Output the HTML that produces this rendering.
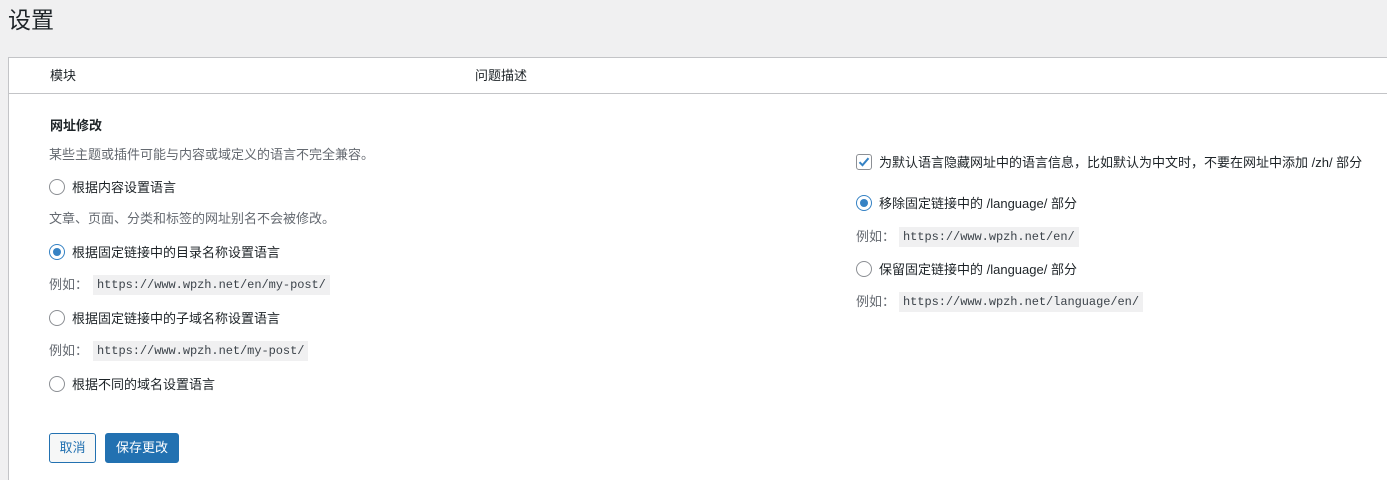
<!DOCTYPE html>
<html><head><meta charset="utf-8"><style>
*{margin:0;padding:0;box-sizing:border-box}
html,body{width:1387px;height:480px;overflow:hidden}
body{background:#f0f0f1;font-family:"Liberation Sans","Noto Sans CJK SC",sans-serif;font-size:13px;color:#1d2327;position:relative}
.a{position:absolute;white-space:nowrap;line-height:18px}
h1{position:absolute;left:8px;top:5px;font-size:23px;font-weight:400;line-height:30px;color:#1d2327}
.panel{position:absolute;left:8px;top:57px;width:1379px;height:423px;background:#fff;border:1px solid #c3c4c7;border-right:0;border-bottom:0}
.hdr{position:absolute;left:8px;top:93px;width:1379px;border-top:1px solid #c3c4c7}
.gray{color:#646970}
.r{position:absolute;width:16px;height:16px;border:1px solid #8c8f94;border-radius:50%;background:#fff}
.r.on::after{content:"";position:absolute;left:3px;top:3px;width:8px;height:8px;border-radius:50%;background:#3582c4}
.r.on{border-color:#3582c4}
code{position:absolute;font-family:"Liberation Mono",monospace;font-size:12px;background:#f0f0f1;color:#3c434a;padding:0 4px;line-height:20px;white-space:nowrap;letter-spacing:-0.05px}
.btn{position:absolute;height:30px;border-radius:3px;line-height:28px;text-align:center;font-size:13px}
</style></head><body>
<h1>设置</h1>
<div class="panel"></div>
<div class="hdr"></div>
<div class="a" style="left:50px;top:67px">模块</div>
<div class="a" style="left:475px;top:67px">问题描述</div>
<div class="a" style="left:50px;top:117px;font-weight:700">网址修改</div>
<div class="a gray" style="left:49px;top:146px">某些主题或插件可能与内容或域定义的语言不完全兼容。</div>
<div class="r" style="left:49px;top:179px"></div><div class="a" style="left:72px;top:179px">根据内容设置语言</div>
<div class="a gray" style="left:49px;top:210px">文章、页面、分类和标签的网址别名不会被修改。</div>
<div class="r on" style="left:49px;top:244px"></div><div class="a" style="left:72px;top:244px">根据固定链接中的目录名称设置语言</div>
<div class="a gray" style="left:49px;top:276px">例如：</div><code style="left:93px;top:275px">https://www.wpzh.net/en/my-post/</code>
<div class="r" style="left:49px;top:310px"></div><div class="a" style="left:72px;top:310px">根据固定链接中的子域名称设置语言</div>
<div class="a gray" style="left:49px;top:342px">例如：</div><code style="left:93px;top:341px">https://www.wpzh.net/my-post/</code>
<div class="r" style="left:49px;top:376px"></div><div class="a" style="left:72px;top:376px">根据不同的域名设置语言</div>
<div class="btn" style="left:49px;top:433px;width:47px;border:1px solid #2271b1;color:#2271b1;background:#f6f7f7">取消</div>
<div class="btn" style="left:105px;top:433px;width:74px;border:1px solid #2271b1;color:#fff;background:#2271b1">保存更改</div>
<div style="position:absolute;left:856px;top:154px;width:16px;height:16px;border:1px solid #8c8f94;border-radius:3px;background:#fff"><svg width="16" height="16" viewBox="0 0 16 16" style="position:absolute;left:-1px;top:-1px"><path d="M3.5 8.2l3 3 6-7" stroke="#3582c4" stroke-width="2" fill="none"/></svg></div>
<div class="a" style="left:879px;top:154px">为默认语言隐藏网址中的语言信息，比如默认为中文时，不要在网址中添加 /zh/ 部分</div>
<div class="r on" style="left:856px;top:195px"></div><div class="a" style="left:879px;top:195px">移除固定链接中的 /language/ 部分</div>
<div class="a gray" style="left:856px;top:228px">例如：</div><code style="left:899px;top:227px">https://www.wpzh.net/en/</code>
<div class="r" style="left:856px;top:261px"></div><div class="a" style="left:879px;top:261px">保留固定链接中的 /language/ 部分</div>
<div class="a gray" style="left:856px;top:293px">例如：</div><code style="left:899px;top:292px">https://www.wpzh.net/language/en/</code>
</body></html>
